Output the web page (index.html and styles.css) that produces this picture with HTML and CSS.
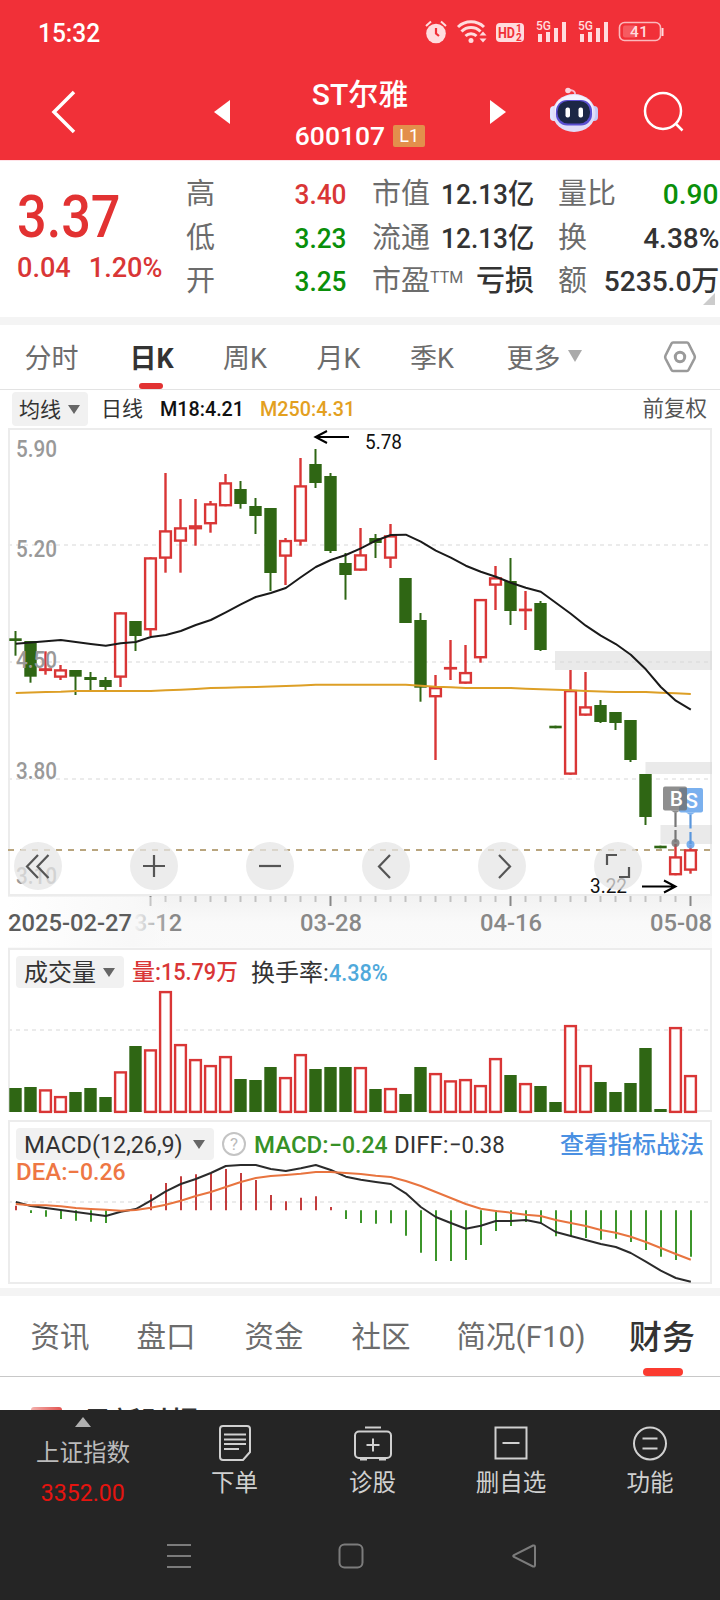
FILE: index.html
```html
<!DOCTYPE html>
<html lang="zh-CN">
<head>
    <meta charset="UTF-8">
    <meta name="viewport" content="width=device-width, initial-scale=1.0">
    <title>ST尔雅 600107</title>
    <link rel="stylesheet" href="styles.css">
</head>
<body>
    <header class="header">
        <div class="status-bar">
            <span class="clock">15:32</span>
            <svg class="status-icons" width="240" height="26" viewBox="0 0 240 26">
                <g fill="#ffdcde">
                    <circle cx="11" cy="14.500" r="9.800"/>
                    <path d="M1 7L6 2.500M21 7L16 2.500" stroke="#ffdcde" stroke-width="2"/>
                    <path d="M11 9v5.500l3 2.500" fill="none" stroke="#f13038" stroke-width="2.200"/>
                    <circle cx="46" cy="21.500" r="2.500"/>
                    <path d="M58 12.500l3.500 4h-7zM58 23.500l3.500-4h-7z"/>
                    <rect x="71" y="4" width="28" height="19" rx="4"/>
                    <path d="M113 15h4v8h-4zM121 13h4v10h-4zM129 9h4v14h-4zM137 3h4v20h-4zM155 15h4v8h-4zM163 13h4v10h-4zM171 9h4v14h-4zM179 3h4v20h-4z"/>
                    <rect x="236.500" y="9" width="2" height="8"/>
                </g>
                <path d="M33 8a19 19 0 0 1 26 0M36.500 12.500a13.500 13.500 0 0 1 19 0M40.500 17a8 8 0 0 1 11 0" fill="none" stroke="#ffdcde" stroke-width="3"/>
                <text x="73" y="18.500" class="hd" textLength="17" lengthAdjust="spacingAndGlyphs">HD</text>
                <text x="91" y="13" class="hd-small">1</text>
                <text x="91" y="22" class="hd-small">2</text>
                <text x="111" y="11" class="net" textLength="15" lengthAdjust="spacingAndGlyphs">5G</text>
                <text x="153" y="11" class="net" textLength="15" lengthAdjust="spacingAndGlyphs">5G</text>
                <rect x="194.500" y="3.500" width="41" height="18" rx="5" fill="none" stroke="#fbb9bc" stroke-width="1.600"/>
                <rect x="198" y="6.500" width="14" height="12" rx="2" fill="#f65b61"/>
                <text x="205" y="18" class="battery" textLength="18">41</text>
            </svg>
        </div>
        <div class="nav-bar">
            <svg class="back" width="26" height="44" viewBox="0 0 26 44"><path d="M24 2L4 22l20 20" fill="none" stroke="#fff" stroke-width="3.500"/></svg>
            <svg class="prev" width="16" height="24" viewBox="0 0 16 24"><path d="M16 0v24L0 12z" fill="#fff"/></svg>
            <div class="stock">
                <div class="stock-name">ST尔雅</div>
                <div class="stock-code"><span>600107</span><em>L1</em></div>
            </div>
            <svg class="next" width="16" height="24" viewBox="0 0 16 24"><path d="M0 0v24l16-12z" fill="#fff"/></svg>
            <svg class="robot" width="48" height="46" viewBox="0 0 48 46">
                <path d="M25 10V6q-1-3-6-3" fill="none" stroke="#f7b9cf" stroke-width="1.800"/>
                <circle cx="18" cy="3.500" r="2.800" fill="#fbd3df"/>
                <rect x="0" y="19" width="9" height="15" rx="4" fill="#e0e6ff"/>
                <rect x="39" y="19" width="9" height="15" rx="4" fill="#c3c9f7"/>
                <ellipse cx="24" cy="26" rx="21.500" ry="19" fill="#e0dcf8"/>
                <ellipse cx="24" cy="22" rx="19" ry="14" fill="#f4f3ff"/>
                <rect x="6" y="13" width="36" height="25.500" rx="11" fill="#5a4fd0"/>
                <rect x="7.500" y="14" width="32.500" height="22.500" rx="10.500" fill="#1c2746"/>
                <rect x="15.500" y="20.500" width="4.500" height="10" rx="2" fill="#fff"/>
                <rect x="28.500" y="20.500" width="4.500" height="10" rx="2" fill="#fff"/>
            </svg>
            <svg class="search" width="42" height="42" viewBox="0 0 42 42"><g fill="none" stroke="#fff" stroke-width="2.500"><circle cx="20" cy="20" r="18"/><path d="M32.500 32.500l7 7"/></g></svg>
        </div>
    </header>

    <section class="quote">
        <div class="price">
            <div class="last">3.37</div>
            <div class="change"><span>0.04</span><span>1.20%</span></div>
        </div>
        <dl class="col col-a">
            <div><dt>高</dt><dd class="red">3.40</dd></div>
            <div><dt>低</dt><dd class="green">3.23</dd></div>
            <div><dt>开</dt><dd class="green">3.25</dd></div>
        </dl>
        <dl class="col col-b">
            <div><dt>市值</dt><dd>12.13亿</dd></div>
            <div><dt>流通</dt><dd>12.13亿</dd></div>
            <div><dt>市盈<sup>TTM</sup></dt><dd class="cjk">亏损</dd></div>
        </dl>
        <dl class="col col-c">
            <div><dt>量比</dt><dd class="green">0.90</dd></div>
            <div><dt>换</dt><dd>4.38%</dd></div>
            <div><dt>额</dt><dd>5235.0万</dd></div>
        </dl>
        <i class="corner"></i>
    </section>

    <nav class="period-tabs">
        <a>分时</a>
        <a class="active">日K</a>
        <a>周K</a>
        <a>月K</a>
        <a>季K</a>
        <a>更多<i class="caret"></i></a>
        <svg width="34" height="34" viewBox="0 0 34 34"><g fill="none" stroke="#9a9a9a" stroke-width="2.600"><path d="M10 2.500h14q1 0 1.500 1l6 12q.7 1.500 0 3l-6 11.500q-.5 1-1.500 1H10q-1 0-1.500-1l-6-11.500q-.7-1.500 0-3l6-12q.5-1 1.500-1z"/><circle cx="17" cy="17" r="4.700" stroke-width="3"/></g></svg>
    </nav>

    <div class="ma-row">
        <span class="pill">均线<i class="caret"></i></span>
        <span class="ma-name">日线</span>
        <span class="ma18">M18:4.21</span>
        <span class="ma250">M250:4.31</span>
        <span class="adjust">前复权</span>
    </div>

    <div class="kline">
        <svg id="kline" width="720" height="520" viewBox="0 428 720 520"></svg>
        <div class="tools">
            <button><svg viewBox="0 0 48 48"><path d="M24 13L13 24.500 24 36M34.500 13L23.500 24.500 34.500 36"/></svg></button>
            <button><svg viewBox="0 0 48 48"><path d="M13 24h22M24 13v22"/></svg></button>
            <button><svg viewBox="0 0 48 48"><path d="M13 24h22"/></svg></button>
            <button><svg viewBox="0 0 48 48"><path d="M28 13L17 24.500 28 36"/></svg></button>
            <button><svg viewBox="0 0 48 48"><path d="M21 13l11 11.500L21 36"/></svg></button>
            <button><svg viewBox="0 0 48 48"><path d="M13 23V13h10M35 25v10H25"/></svg></button>
        </div>
    </div>

    <div class="sub volume">
        <div class="sub-head">
            <span class="pill">成交量<i class="caret"></i></span>
            <span class="red">量:<b>15.79万</b></span>
            <span class="turnover">换手率:<b>4.38%</b></span>
        </div>
        <svg id="volume" width="720" height="166" viewBox="0 948 720 166"></svg>
    </div>

    <div class="sub macd">
        <div class="sub-head">
            <span class="pill">MACD<b>(12,26,9)</b><i class="caret"></i></span>
            <i class="help">?</i>
            <span class="macd-value">MACD:<b>−0.24</b></span>
            <span class="diff-value">DIFF:<b>−0.38</b></span>
            <a class="guide">查看指标战法</a>
        </div>
        <div class="dea-value">DEA:<b>−0.26</b></div>
        <svg id="macd" width="720" height="164" viewBox="0 1120 720 164"></svg>
    </div>

    <nav class="info-tabs">
        <a>资讯</a>
        <a>盘口</a>
        <a>资金</a>
        <a>社区</a>
        <a class="wide">简况(F10)</a>
        <a class="active">财务</a>
    </nav>
    <section class="report">
        <i class="report-icon"></i>
        <h2>最新财报</h2>
    </section>

    <footer class="footer">
        <div class="actions">
            <div class="index">
                <i></i>
                <span>上证指数</span>
                <strong>3352.00</strong>
            </div>
            <div class="action">
                <svg width="36" height="40" viewBox="0 0 36 40"><path d="M6 3h24q3 0 3 3v23l-7 8H6q-3 0-3-3V6q0-3 3-3zM7 11.500h22M7 16.500h22M7 21h22M7 26h15"/></svg>
                <span>下单</span>
            </div>
            <div class="action">
                <svg width="40" height="40" viewBox="0 0 40 40"><rect x="2" y="8.500" width="36" height="26.500" rx="4"/><path d="M12 4.500h16M20 15.500v13M13.500 22h13M7 36.500h7M26 36.500h7"/></svg>
                <span>诊股</span>
            </div>
            <div class="action">
                <svg width="36" height="40" viewBox="0 0 36 40"><path d="M2.500 4.500h31v31h-31zM9.500 20h17"/></svg>
                <span>删自选</span>
            </div>
            <div class="action">
                <svg width="36" height="40" viewBox="0 0 36 40"><circle cx="18" cy="20.500" r="16"/><path d="M10.500 15.500h15M10.500 25.500h15"/></svg>
                <span>功能</span>
            </div>
        </div>
        <div class="system-nav">
            <svg width="24" height="26" viewBox="0 0 24 26"><path d="M0 2h24M0 13h24M0 24h24"/></svg>
            <svg width="26" height="26" viewBox="0 0 26 26"><rect x="1.500" y="1.500" width="23" height="23" rx="5"/></svg>
            <svg width="26" height="26" viewBox="0 0 26 26"><path d="M22 2.500L3 12q-1.500 1 0 2l19 9.500q2 .5 2-1.500V4q0-2-2-1.500z"/></svg>
        </div>
    </footer>
    <script src="chart.js"></script>
</body>
</html>
```
FILE: styles.css
```css
* {
    box-sizing: border-box;
}
body {
    margin: 0;
    width: 720px;
    height: 1600px;
    overflow: hidden;
    display: flex;
    flex-direction: column;
    background: #fff;
    color: #333;
    font-family: Roboto, "Noto Sans CJK SC", sans-serif;
}
svg {
    display: block;
    flex: none;
}
i, em {
    font-style: normal;
}
b {
    font-weight: inherit;
    display: inline-block;
    transform: scaleX(0.92);
    transform-origin: left;
}
.red {
    color: #d93636;
}
.green {
    color: #0a8f0a;
}

/* header */
.header {
    height: 161px;
    flex: none;
    background: #f13038;
    border-bottom: 1px solid #ffe3e8;
    color: #fff;
}
.status-bar {
    display: flex;
    justify-content: space-between;
    height: 64px;
    padding: 19px 55px 0 38px;
}
.clock {
    font-size: 25px;
    line-height: 29px;
    font-weight: 500;
    transform: scaleX(0.98);
    transform-origin: left;
}
.hd {
    font-size: 15px;
    font-weight: 700;
    fill: #f13038;
}
.hd-small {
    font-size: 10px;
    font-weight: 700;
    fill: #f13038;
}
.net {
    font-size: 13px;
    font-weight: 500;
    fill: #ffdcde;
}
.battery {
    font-size: 15.500px;
    font-weight: 500;
    fill: #ffdcde;
}
.nav-bar {
    display: flex;
    align-items: center;
    height: 96px;
}
.back {
    margin-left: 50px;
}
.prev {
    margin-left: 138px;
}
.stock {
    width: 260px;
    padding-top: 7px;
    text-align: center;
}
.stock-name {
    font-size: 30px;
    line-height: 40px;
    font-weight: 500;
}
.stock-code {
    display: flex;
    justify-content: center;
    align-items: center;
    gap: 8px;
    height: 41px;
    font-size: 26.500px;
    font-weight: 500;
}
.stock-code em {
    width: 32px;
    height: 22px;
    border-radius: 2px;
    background: #e38f4c;
    font-size: 18px;
    font-weight: 400;
    line-height: 22px;
}
.robot {
    margin: 0 0 4px 44px;
}
.search {
    margin-left: 45px;
}

/* quote */
.quote {
    position: relative;
    display: flex;
    height: 164px;
    flex: none;
    border-bottom: 8px solid #f4f4f4;
    padding-top: 12px;
}
.price {
    width: 186px;
    padding-left: 17px;
    color: #e23232;
}
.last {
    padding-top: 11px;
    font-size: 60px;
    font-weight: 500;
    line-height: 66px;
    transform: scaleX(0.87);
    transform-origin: left;
}
.change {
    display: flex;
    gap: 13px;
    font-size: 28.500px;
    font-weight: 500;
    line-height: 36px;
    color: #d93636;
    transform: scaleX(0.95);
    transform-origin: left;
}
.change span + span {
    margin-left: 6px;
}
.col {
    margin: 0;
}
.col div {
    display: flex;
    justify-content: space-between;
    height: 43.500px;
    line-height: 43.500px;
}
.col-a {
    width: 161px;
}
.col-b {
    width: 162px;
    margin-left: 25px;
}
.col-c {
    width: 161px;
    margin-left: 24px;
}
dt {
    font-size: 29px;
    color: #6c6c6c;
    white-space: nowrap;
}
dt sup {
    font-size: 16px;
    line-height: 0;
    vertical-align: 8px;
}
dd {
    margin: 0;
    font-size: 28.500px;
    font-weight: 500;
    white-space: nowrap;
    transform: scaleX(0.92);
    transform-origin: right;
}
.col-c dd {
    transform: scaleX(0.985);
}
dd.cjk {
    font-size: 29px;
    transform: none;
}
.corner {
    position: absolute;
    right: 5px;
    bottom: 12px;
    border-left: 12px solid transparent;
    border-bottom: 12px solid #ccc;
}

/* period tabs */
.period-tabs {
    display: grid;
    grid-template-columns: 103px 97px 90px 97px 90px 134px 109px;
    height: 65px;
    flex: none;
    border-bottom: 1px solid #e3e3e3;
    font-size: 27px;
    line-height: 68px;
    text-align: center;
    color: #6c6c6c;
}
.period-tabs .active {
    position: relative;
    color: #333;
    font-weight: 700;
}
.period-tabs .active::after {
    content: "";
    position: absolute;
    left: 36px;
    top: 58px;
    width: 24px;
    height: 6px;
    border-radius: 3px;
    background: #e23232;
}
.period-tabs svg {
    margin: 15px 0 0 52px;
}
.caret {
    display: inline-block;
    margin-left: 7px;
    border: 6.500px solid transparent;
    border-top: 9px solid #666;
    border-bottom: 0;
    vertical-align: middle;
    position: relative;
    top: -2px;
}
.period-tabs .caret {
    border-width: 7.500px;
    border-top: 12px solid #aaa;
    border-bottom: 0;
    top: -5px;
}

/* moving average row */
.ma-row {
    display: flex;
    align-items: center;
    height: 38px;
    flex: none;
    padding: 0 13px 0 12px;
    font-size: 21px;
    line-height: 36px;
    white-space: nowrap;
}
.pill {
    border-radius: 4px;
    background: #f1f1f1;
}
.ma-row .pill {
    width: 76px;
    height: 34px;
    padding-left: 7px;
    margin-right: 13px;
}
.ma-name {
    width: 59px;
}
.ma18, .ma250 {
    width: 100px;
    font-weight: 500;
    color: #111;
    transform: scaleX(0.94);
    transform-origin: left;
}
.ma250 {
    color: #e3a01f;
}
.adjust {
    margin-left: auto;
    font-size: 21.500px;
    color: #555;
}

/* candles */
.kline {
    position: relative;
    height: 520px;
    flex: none;
}
.tools {
    position: absolute;
    left: 14px;
    top: 414px;
    display: flex;
    gap: 68px;
}
.tools button {
    width: 48px;
    height: 48px;
    padding: 0;
    border: 0;
    border-radius: 50%;
    background: rgba(230, 230, 230, 0.75);
}
.tools path {
    fill: none;
    stroke: #555;
    stroke-width: 2.200;
}
.frame {
    fill: none;
    stroke: #ececec;
    stroke-width: 2;
}
.grid {
    stroke: #ebebeb;
    stroke-width: 2;
    stroke-dasharray: 4 4;
}
.cost {
    stroke: #b9a57e;
    stroke-width: 2;
    stroke-dasharray: 6 6;
}
.up {
    fill: #fff;
    stroke: #d93636;
    stroke-width: 2.400;
}
.down {
    fill: #2f6614;
}
.wick-up {
    stroke: #d93636;
    stroke-width: 2.400;
}
.wick-down {
    stroke: #2f6614;
    stroke-width: 2;
}
.macd-up {
    stroke: #c33c3c;
    stroke-width: 2;
}
.macd-down {
    stroke: #3c952a;
    stroke-width: 2;
}
.line {
    fill: none;
    stroke-width: 2;
    stroke-linejoin: round;
}
.axis {
    font-size: 23.500px;
    font-weight: 500;
    fill: #999;
}
.date {
    font-size: 23px;
    font-weight: 500;
    fill: #888;
}
.date.first {
    fill: #5c5c5c;
}
.mark {
    font-size: 20px;
    fill: #111;
}
.flag {
    font-size: 21px;
    font-weight: 500;
    fill: #fff;
    text-anchor: middle;
}

/* volume and macd */
.sub {
    display: grid;
    flex: none;
}
.sub svg, .sub-head {
    grid-area: 1 / 1;
}
.sub-head {
    z-index: 1;
    display: flex;
    align-items: flex-start;
    height: 42px;
    padding-left: 16px;
    font-size: 24px;
    line-height: 34px;
    white-space: nowrap;
}
.sub-head .pill {
    height: 32px;
}
.volume {
    height: 172px;
}
.volume .sub-head {
    padding-top: 8px;
}
.volume .pill {
    width: 108px;
    padding-left: 8px;
    margin-right: 8px;
}
.volume .red {
    width: 119px;
    font-size: 23px;
    font-weight: 500;
}
.volume .red b {
    transform: scaleX(0.94);
}
.turnover b {
    color: #4fa9db;
    font-weight: 500;
    transform: scaleX(0.9);
}
.macd {
    height: 168px;
}
.macd .sub-head {
    padding: 8px 16px 0;
}
.macd .pill {
    width: 198px;
    padding-left: 8px;
}
.macd .pill b {
    transform: scaleX(0.97);
}
.help {
    width: 24px;
    height: 24px;
    margin: 4px 8px 0;
    border: 2px solid #c4c4c4;
    border-radius: 50%;
    font-size: 17px;
    line-height: 21px;
    text-align: center;
    color: #bbb;
}
.macd-value {
    width: 140px;
    color: #369126;
    font-weight: 500;
}
.macd-value b, .dea-value b {
    transform: scaleX(0.96);
}
.guide {
    margin-left: auto;
    color: #4a90e2;
    font-weight: 500;
}
.dea-value {
    grid-area: 1 / 1;
    padding: 36px 0 0 16px;
    font-size: 24px;
    line-height: 32px;
    color: #ee7744;
    font-weight: 500;
}

/* info tabs */
.info-tabs {
    display: grid;
    grid-template-columns: 106px 106px 110px 104px 176px 106px;
    height: 89px;
    flex: none;
    padding: 0 8px 0 7px;
    border-top: 8px solid #f4f4f4;
    border-bottom: 1px solid #c8c8c8;
    font-size: 29.500px;
    line-height: 83px;
    text-align: center;
    color: #6c6c6c;
}
.info-tabs .active {
    position: relative;
    font-size: 33px;
    font-weight: 500;
    color: #333;
}
.info-tabs .active::after {
    content: "";
    position: absolute;
    left: 34px;
    top: 72px;
    width: 40px;
    height: 8px;
    border-radius: 4px;
    background: #fb3b30;
}
.report {
    display: flex;
    height: 33px;
    flex: none;
    overflow: hidden;
    padding: 30px 31px 0;
}
.report-icon {
    width: 31px;
    height: 30px;
    margin-right: 21px;
    border-radius: 3px;
    background: linear-gradient(90deg, #f3b0ac, #e25350);
}
.report h2 {
    margin: 0;
    font-size: 29px;
    line-height: 32px;
    font-weight: 500;
}

/* footer */
.footer {
    flex: 1;
    background: #252525;
    color: #d0d0d0;
}
.actions {
    display: grid;
    grid-template-columns: 166px 137px 139px 138px 140px;
    height: 110px;
    text-align: center;
    font-size: 23.500px;
}
.index {
    display: flex;
    flex-direction: column;
    align-items: center;
    padding-top: 7px;
    color: #bbb;
}
.index i {
    border: 8.500px solid transparent;
    border-bottom: 10px solid #b0b0b0;
    border-top: 0;
}
.index span {
    margin-top: 8px;
    line-height: 36px;
}
.index strong {
    margin-top: 2px;
    line-height: 40px;
    font-size: 23.500px;
    font-weight: 400;
    color: #e5140f;
    transform: scaleX(0.98);
}
.action {
    display: flex;
    flex-direction: column;
    align-items: center;
    padding-top: 13px;
}
.action span {
    line-height: 40px;
}
.footer svg {
    fill: none;
    stroke: #d0d0d0;
    stroke-width: 2;
}
.system-nav {
    display: flex;
    padding: 23px 0 0 167px;
    gap: 147px;
}
.footer .system-nav svg {
    stroke: #7c7c7c;
}
```
FILE: chart.js
```js
// colour, high, body top, body bottom, low
const candles = [
    ['g', 631, 638.3, 641, 655.7], ['g', 641, 641, 676.7, 682.7], ['r', 651.3, 668.3, 671, 674.7], ['r', 665, 669.3, 677.7, 680],
    ['g', 670, 670, 676.7, 695], ['g', 672, 677, 680, 690], ['g', 677, 680, 687, 690], ['r', 612.3, 612.3, 677.7, 687],
    ['g', 621, 621, 636, 651], ['r', 557.3, 557.3, 630.3, 636], ['r', 473, 530.3, 558.7, 572.7], ['r', 499, 527.3, 541.7, 572.7],
    ['r', 499, 525.3, 529.3, 545.7], ['r', 501, 503.3, 524.3, 532.7], ['r', 474, 482.3, 506.3, 506.3], ['g', 481, 489, 504, 508.7],
    ['g', 498, 506, 516, 534], ['g', 508, 508, 573, 591], ['r', 538, 540, 556.7, 585], ['r', 458, 485.3, 541.7, 545.7],
    ['g', 449, 464, 483, 488], ['g', 473, 476, 551, 553], ['g', 553, 563, 575, 599.7], ['r', 528, 554.3, 570.7, 570.7],
    ['g', 534, 538, 543, 558], ['r', 524, 535.3, 558.7, 568], ['g', 578, 578, 623, 623], ['g', 613, 620, 687.7, 701.7],
    ['r', 675, 687, 697.3, 760], ['r', 640, 667, 669, 680], ['r', 645, 672, 683.7, 683.7], ['r', 599, 599, 658.3, 662.7],
    ['r', 566, 577.3, 585.7, 610], ['g', 558, 581, 611, 625], ['r', 591, 608.7, 611, 630], ['g', 601, 603, 650, 651],
    ['g', 725.7, 725.7, 728.3, 728.3], ['r', 670, 690, 774.7, 774.7], ['r', 672, 706.3, 715.7, 715.7], ['g', 700, 705, 722, 723],
    ['g', 712, 712, 723, 730], ['g', 720, 720, 760, 762], ['g', 774, 774, 817, 825], ['g', 845.7, 845.7, 848.3, 848.3],
    ['r', 844, 856.3, 875.3, 875.3], ['r', 845, 849.3, 870.7, 873.7]
];
const ma18 = [643.7, 642.5, 641.3, 640, 642, 644, 645.7, 643.3, 642, 637, 635, 631, 625, 620, 612.3, 604.3, 597, 593, 588, 577.3, 567, 560, 555, 548.3, 540.7, 535, 534.7, 541.7, 550.7, 557.7, 565.7, 571.7, 576.7, 582.7, 587.7, 591.7, 602.7, 613.7, 625.7, 635.7, 644, 654.7, 669.3, 687, 700.7, 709.7];
const ma250 = [693, 692.6, 692, 691.7, 691, 691, 691, 691, 691, 691, 690.3, 689.7, 689, 688, 687.7, 687.3, 687, 686.5, 686, 685.5, 684.7, 684.7, 684.7, 684.7, 684.7, 684.7, 684.7, 685.7, 686.7, 687.3, 688, 688, 688, 688, 688.7, 689.3, 689.8, 690.3, 691, 691.5, 692, 692, 692, 692.7, 693.3, 694];
const volumes = [1088, 1087, 1089.3, 1096, 1092, 1088, 1097, 1071.3, 1046, 1049.3, 991, 1044, 1059, 1065, 1056, 1079, 1080, 1067, 1077, 1054, 1069, 1067, 1067, 1067, 1089, 1088, 1094, 1067, 1073, 1080.3, 1079, 1085, 1058, 1075, 1083, 1086, 1102, 1025, 1065, 1082, 1092, 1083, 1048, 1109, 1027, 1075];
const bars = [1205.7, 1213, 1216.7, 1219, 1220.7, 1221.7, 1223, 1210.3, 1210.3, 1194.3, 1183, 1176.3, 1174.3, 1173.3, 1169, 1173, 1180, 1195, 1201.3, 1197.7, 1196.3, 1207, 1219, 1223, 1223.7, 1223.3, 1235.7, 1252.7, 1261, 1261, 1260, 1245, 1231, 1226, 1222, 1224, 1236.3, 1236.3, 1238, 1239.7, 1238.7, 1242, 1250, 1256.7, 1260, 1256.7];
const diff = [1202, 1206, 1208, 1210, 1212, 1214, 1216, 1211.7, 1209, 1200.7, 1191.3, 1184, 1179, 1173, 1166, 1165, 1165, 1169, 1171, 1168.3, 1165, 1170, 1176.7, 1179.7, 1182, 1184, 1193.3, 1207, 1217, 1223, 1228.7, 1225.7, 1221, 1221, 1220, 1223, 1232, 1236, 1240, 1244, 1247, 1253, 1261.7, 1270.7, 1278, 1281.7];
const dea = [1204, 1205.3, 1205.3, 1206.3, 1208, 1209, 1209.7, 1210.7, 1210, 1207.7, 1204.7, 1200.7, 1196, 1192, 1187, 1182, 1178, 1176, 1175, 1173.7, 1172, 1172, 1173, 1174, 1175.7, 1177, 1181, 1186, 1192, 1198, 1204, 1208.7, 1211, 1212.7, 1214.7, 1216, 1220, 1223, 1226, 1230, 1232.7, 1236.7, 1242, 1248, 1254, 1259.7];

const x = i => 15.5 + 15 * i;
const line = (cls, x1, y1, x2, y2) => `<line class="${cls}" x1="${x1}" y1="${y1}" x2="${x2}" y2="${y2}"/>`;
const curve = (data, color) => `<polyline class="line" stroke="${color}" points="${data.map((y, i) => `${x(i) + 0.3},${y}`).join(' ')}"/>`;
const frame = (y, h) => `<rect class="frame" x="9" y="${y}" width="702" height="${h}"/>`;
const text = (cls, left, y, width, value) =>
    `<text class="${cls}" x="${left}" y="${y}" textLength="${width}" lengthAdjust="spacingAndGlyphs">${value}</text>`;

function box(color, cx, top, bottom) {
    if (color === 'g') {
        return `<rect class="down" x="${cx - 6.2}" y="${top}" width="12.400" height="${bottom - top}"/>`;
    }
    return `<rect class="up" x="${cx - 5.4}" y="${top + 1.1}" width="10.800" height="${Math.max(bottom - top - 2.2, 0.3)}"/>`;
}

function drawKline() {
    let out = `<defs>
        <linearGradient id="fade" x1="0" x2="0" y1="0" y2="1"><stop offset="0" stop-color="#f2f2f2"/><stop offset="0.5" stop-color="#f9f9f9"/><stop offset="1" stop-color="#fafafa"/></linearGradient>
        <linearGradient id="mask" x1="0" x2="1" y1="0" y2="0"><stop offset="0" stop-color="#fff"/><stop offset="0.76" stop-color="#f8f8f8"/><stop offset="1" stop-color="#f8f8f8" stop-opacity="0"/></linearGradient>
    </defs>`;
    out += '<rect x="8" y="896" width="704" height="52" fill="url(#fade)"/>';
    out += frame(429, 466);
    [545, 662, 779].forEach(y => out += line('grid', 8, y, 711, y));
    out += line('cost', 8, 850, 711, 850);

    candles.forEach(([color, high, top, bottom, low], i) => {
        out += line(color === 'r' ? 'wick-up' : 'wick-down', x(i), high, x(i), low);
        out += box(color, x(i), top, bottom);
    });
    // price gaps
    out += '<g fill="#d8d8d8" fill-opacity="0.55"><rect x="555" y="651" width="157" height="19"/><rect x="645.500" y="762" width="66.500" height="12"/><rect x="660.500" y="825" width="51.500" height="19"/></g>';
    out += curve(ma250, '#dd9f26') + curve(ma18, '#1a1a1a');

    [['5.90', 457], ['5.20', 557], ['4.50', 668], ['3.80', 779], ['3.10', 884]].forEach(([v, y]) => out += text('axis', 16, y, 41, v));
    out += text('mark', 365, 449, 37, '5.78') + text('mark', 590, 893, 37, '3.22');
    out += '<path d="M349 437h-33M327 431l-11.500 6 11.500 6M642 886.500h33M664 880.500l11.500 6-11.500 6" fill="none" stroke="#000" stroke-width="2"/>';

    // trade marks
    out += '<g fill="#6ba7ec" fill-opacity="0.9"><rect x="679" y="788" width="24" height="24.500" rx="2"/><path d="M686 812.500h9l-4.500 3z"/><circle cx="690.500" cy="844.500" r="4"/></g>';
    out += '<path d="M690.500 815v13.500M690.500 832v12" stroke="#5a97dd" stroke-width="2.200"/>';
    out += '<text class="flag" x="691.500" y="808">S</text>';
    out += '<g fill="#6e6e6e" fill-opacity="0.78"><rect x="663" y="786.500" width="24" height="24" rx="2"/><path d="M671 810.500h9l-4.500 3z"/><circle cx="675.500" cy="843" r="4"/></g>';
    out += '<path d="M675.500 813v14M675.500 830v12" stroke="#777" stroke-width="2.200"/>';
    out += '<text class="flag" x="676.500" y="806">B</text>';

    for (let i = 9; i < 46; i++) {
        const major = (i - 9) % 12 === 0;
        out += `<line x1="${x(i)}" x2="${x(i)}" y1="896" y2="${major ? 906 : 902}" stroke="${major ? '#888' : '#c2c2c2'}" stroke-width="2"/>`;
    }
    // the second date fades out under the first one
    out += text('date', 134, 931, 48, '3-12');
    out += '<rect x="8" y="897" width="164" height="50" fill="url(#mask)"/>';
    out += text('date first', 8, 931, 124, '2025-02-27');
    out += text('date', 300, 931, 62, '03-28') + text('date', 480, 931, 62, '04-16') + text('date', 650, 931, 62, '05-08');
    document.getElementById('kline').innerHTML = out;
}

function drawVolume() {
    let out = frame(949, 162) + line('grid', 8, 1030, 711, 1030);
    volumes.forEach((top, i) => {
        const up = candles[i][0] === 'r';
        out += box(candles[i][0], x(i), top, up ? 1113 : 1112);
    });
    document.getElementById('volume').innerHTML = out;
}

function drawMacd() {
    let out = frame(1121, 162) + line('grid', 8, 1202, 711, 1202);
    bars.forEach((y, i) => out += line(y < 1210.3 ? 'macd-up' : 'macd-down', x(i) + 0.5, 1210.3, x(i) + 0.5, y));
    out += curve(diff, '#2b2b2b') + curve(dea, '#e8743f');
    document.getElementById('macd').innerHTML = out;
}

drawKline();
drawVolume();
drawMacd();
```
